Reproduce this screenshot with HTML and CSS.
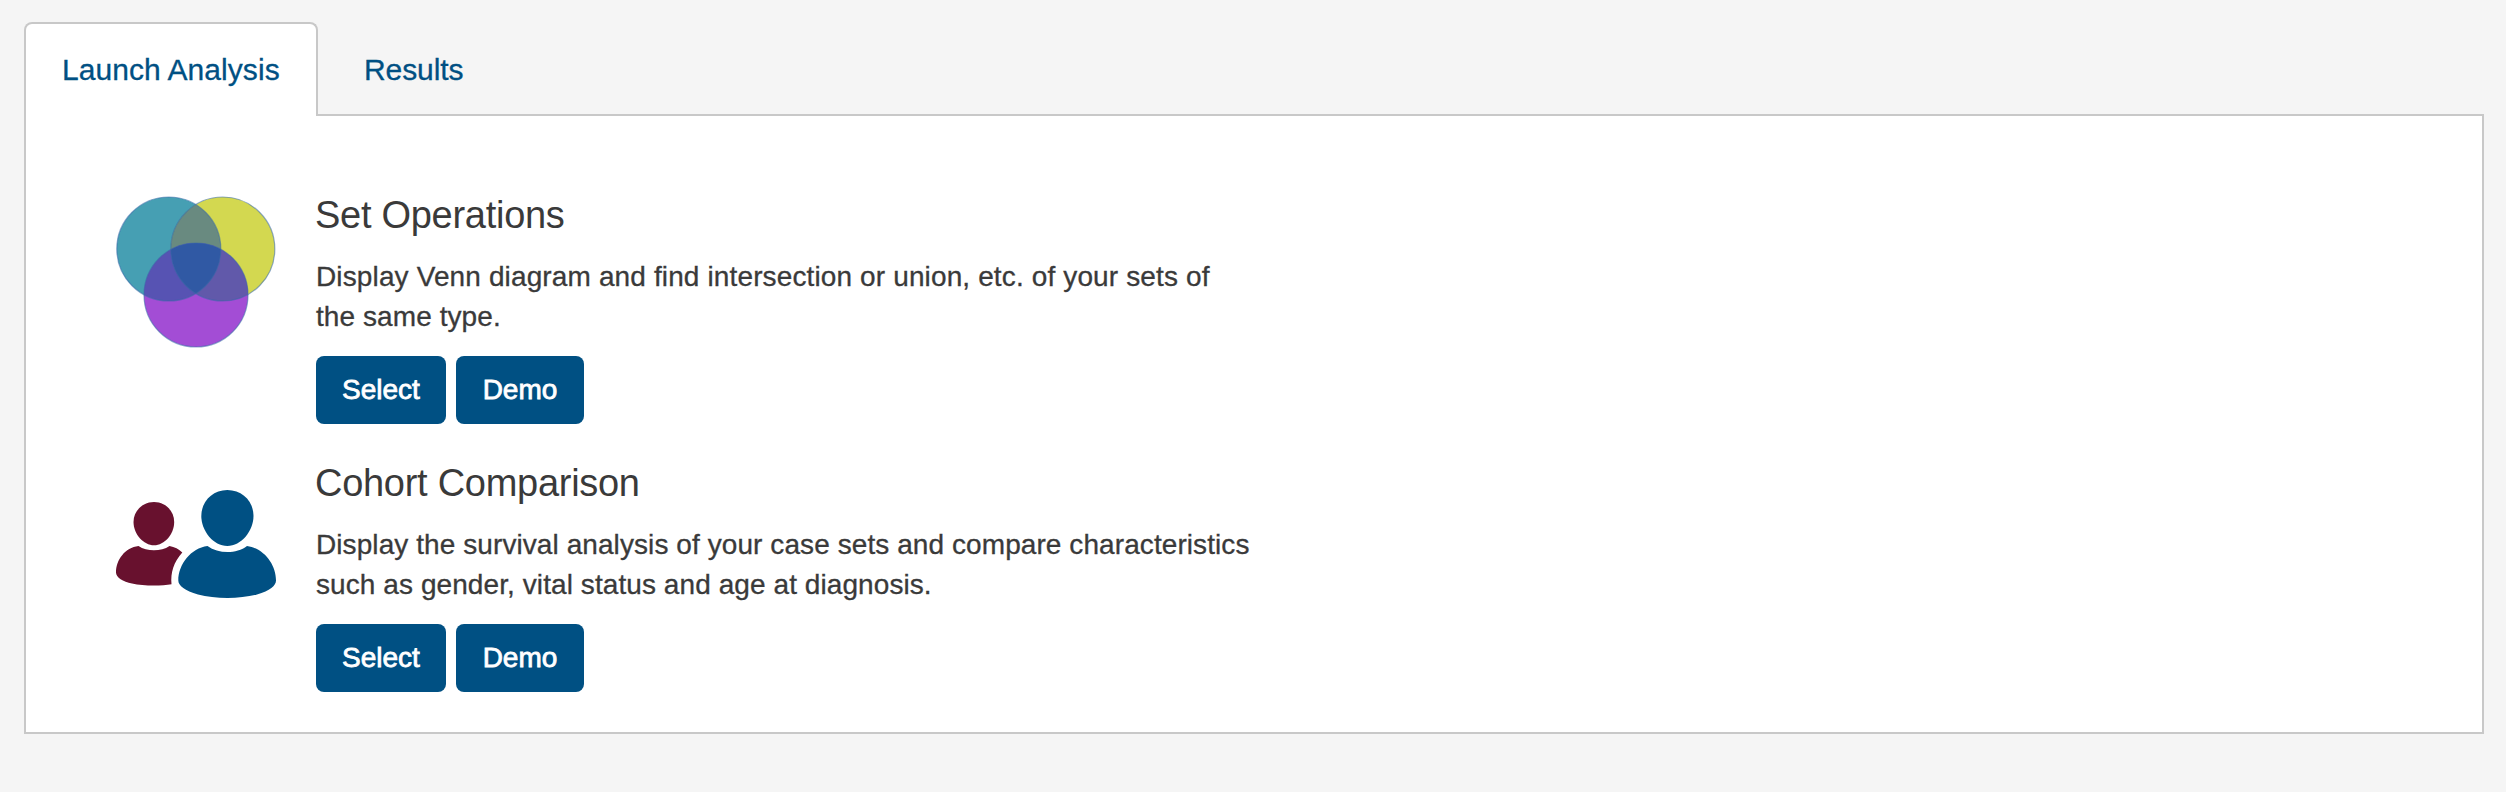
FILE: index.html
```html
<!DOCTYPE html>
<html lang="en">
<head>
<meta charset="utf-8">
<title>Analysis</title>
<link rel="stylesheet" href="styles.css">
</head>
<body>
<nav class="tabs">
  <a class="tab tab-active">Launch Analysis</a>
  <a class="tab">Results</a>
</nav>
<main class="panel">
  <section class="analysis">
    <svg class="icon" viewBox="0 0 200 180" width="200" height="180">
      <defs>
        <clipPath id="left"><circle cx="68.8" cy="69" r="52"/></clipPath>
        <clipPath id="right"><circle cx="122.8" cy="69" r="52"/></clipPath>
      </defs>
      <circle cx="68.8" cy="69" r="52" fill="#469fb3"/>
      <circle cx="122.8" cy="69" r="52" fill="#d3d850"/>
      <circle cx="122.8" cy="69" r="52" fill="#698a80" clip-path="url(#left)"/>
      <circle cx="96" cy="115" r="52" fill="#a34dd5"/>
      <circle cx="96" cy="115" r="52" fill="#5753b3" clip-path="url(#left)"/>
      <g clip-path="url(#right)">
        <circle cx="96" cy="115" r="52" fill="#6159aa"/>
        <circle cx="96" cy="115" r="52" fill="#3059a4" clip-path="url(#left)"/>
      </g>
      <g class="rings">
        <circle cx="68.8" cy="69" r="52"/>
        <circle cx="122.8" cy="69" r="52"/>
        <circle cx="96" cy="115" r="52"/>
      </g>
    </svg>
    <div class="info">
      <h2 class="title">Set Operations</h2>
      <p class="text"><span class="set-line">Display Venn diagram and find intersection or union, etc. of your sets of</span><br>the same type.</p>
      <div class="actions"><button class="btn">Select</button><button class="btn btn-demo">Demo</button></div>
    </div>
  </section>
  <section class="analysis">
    <svg class="icon" viewBox="0 -22 200 180" width="200" height="180">
      <g fill="#68112e">
        <path d="M54 32C65.500 32 74.200 41 74.200 52C74.200 64 64.500 75.300 54 75.300C43.500 75.300 33.500 64 33.500 52C33.500 41 42.500 32 54 32Z"/>
        <path d="M38.500 76C47 81.800 61 81.800 69.500 76C74.500 77 79 79 82.300 82.500C73.500 92 70.500 103 71.500 114.200C62 116 44 116.300 32 113.500C23 111.500 16 107.500 16 102.500C16 90 25 77.500 38.500 76Z"/>
      </g>
      <g fill="#005083">
        <path d="M127.300 20C142.500 20 153.500 31.500 153.500 46C153.500 61 141 76 127.300 76C113.500 76 101.300 61 101.300 46C101.300 31.500 112.500 20 127.300 20Z"/>
        <path d="M107.500 76C118.500 84 136.500 84 147 76C164 78.500 176 94.500 176 110.500C176 115.500 170 121 157 124.500C140 129 115 129 98 124.500C85 121 78.300 115.500 78.300 110.500C78.300 94.500 91 78 107.500 76Z"/>
      </g>
    </svg>
    <div class="info">
      <h2 class="title">Cohort Comparison</h2>
      <p class="text">Display the survival analysis of your case sets and compare characteristics<br>such as gender, vital status and age at diagnosis.</p>
      <div class="actions"><button class="btn">Select</button><button class="btn btn-demo">Demo</button></div>
    </div>
  </section>
</main>
</body>
</html>
```
FILE: styles.css
```css
* { box-sizing: border-box; }
body {
  margin: 0;
  height: 792px;
  padding: 22px 22px 0 24px;
  background: #f5f5f5;
  color: #3a3a3a;
  font-family: "Liberation Sans", Arial, sans-serif;
}
.tabs { display: flex; height: 92px; }
.tab {
  height: 92px;
  padding: 0 44px 0 46px;
  line-height: 96px;
  font-size: 30px;
  letter-spacing: -.1px;
  color: #005083;
  white-space: nowrap;
  -webkit-text-stroke: .3px #005083;
}
.tab-active {
  position: relative;
  z-index: 1;
  width: 294px;
  height: 94px;
  padding: 0 0 0 36px;
  line-height: 92px;
  letter-spacing: .06px;
  background: #fff;
  border: 2px solid #c8c8c8;
  border-bottom: 0;
  border-radius: 8px 8px 0 0;
}
.panel {
  width: 2460px;
  height: 620px;
  padding: 64px 74px 0;
  background: #fff;
  border: 2px solid #c8c8c8;
}
.analysis { display: flex; height: 268px; }
.icon { flex: none; }
.rings { fill: none; stroke: #3668a8; stroke-opacity: .55; stroke-width: 1.2; }
.info { padding: 12px 0 0 16px; }
.title {
  margin: 0 0 19px -1px;
  font-size: 38px;
  font-weight: 400;
  line-height: 46px;
  letter-spacing: -0.28px;
}
.text {
  margin: 0;
  font-size: 28px;
  line-height: 40px;
  letter-spacing: .08px;
  white-space: nowrap;
  -webkit-text-stroke: .3px #3a3a3a;
}
.set-line { letter-spacing: .13px; }
.actions { display: flex; gap: 10px; margin-top: 19px; }
.btn {
  width: 130px;
  height: 68px;
  padding: 0;
  border: 0;
  border-radius: 8px;
  background: #005083;
  color: #fff;
  font: 28px "Liberation Sans", Arial, sans-serif;
  -webkit-text-stroke: .8px #fff;
}
.btn-demo { width: 128px; }
```
